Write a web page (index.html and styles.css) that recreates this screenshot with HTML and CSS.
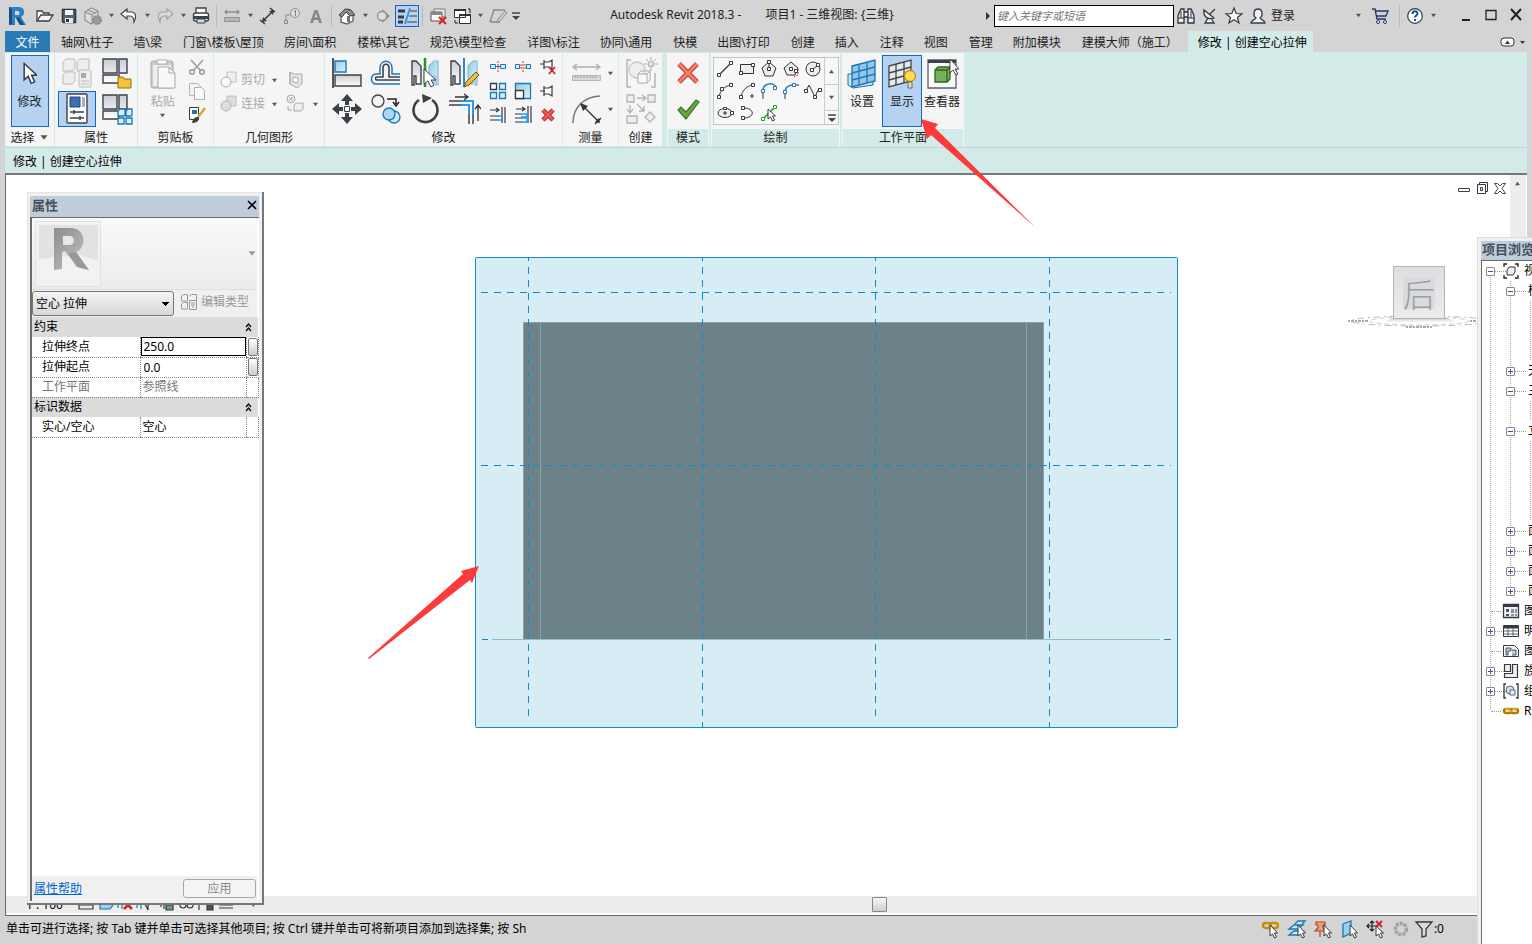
FILE: index.html
```html
<!DOCTYPE html>
<html lang="zh-CN">
<head>
<meta charset="utf-8">
<title>Autodesk Revit 2018.3 - 项目1 - 三维视图: {三维}</title>
<link rel="stylesheet" href="styles.css">
</head>
<body>
<svg class="sprite" aria-hidden="true">
<defs>
<linearGradient id="gw" x1="0" y1="0" x2="0" y2="1"><stop offset="0" stop-color="#c9cdd3"/><stop offset="1" stop-color="#fff"/></linearGradient>
<linearGradient id="gb" x1="0" y1="0" x2="1" y2="1"><stop offset="0" stop-color="#8fcbe9"/><stop offset="1" stop-color="#dff3fc"/></linearGradient>
<linearGradient id="gr" x1="0" y1="0" x2="1" y2="1"><stop offset="0" stop-color="#8e8e8e"/><stop offset="1" stop-color="#c4c4c4"/></linearGradient>
<linearGradient id="gs" x1="0" y1="0" x2="0" y2="1"><stop offset="0" stop-color="#bdbdbd"/><stop offset="1" stop-color="#fff" stop-opacity="0"/></linearGradient>
</defs>
<symbol id="cur" viewBox="0 0 12 20"><path d="M1 1v14l3.500-3 2.500 6 3-1.200-2.600-5.800H12z" fill="#fff" stroke="#3c3f48" stroke-width="1.300"/></symbol>
<symbol id="dn" viewBox="0 0 8 6"><path d="M1 1h6L4 5z" fill="currentColor"/></symbol>
<!-- quick access -->
<symbol id="logo" viewBox="0 0 20 20"><path d="M2 1h10c6 0 7 8 2 10l5 8h-6l-4-7H8v7H2z" fill="#2f7fc4"/><path d="M2 1l3 2v15l-3 1zM12 11l5 8h-4l-4-7z" fill="#174f8c"/><path d="M8 5h3c2 0 2 4 0 4H8z" fill="#d4d4d4"/></symbol>
<symbol id="open" viewBox="0 0 20 20"><path d="M2 15V5h5l1.500 2H14v3" fill="#fff" stroke="#3c4048" stroke-width="1.300"/><path d="M2 15l4-6h12l-4 6z" fill="#f4f4f4" stroke="#3c4048" stroke-width="1.300"/></symbol>
<symbol id="save" viewBox="0 0 20 20"><path d="M3.500 3.500h13v13h-12l-1-1z" fill="#566473" stroke="#2b3440" stroke-width="1.500"/><path d="M6 4h8v5H6z" fill="#f4f6f8"/><path d="M6 12h8v5H6z" fill="#e2e7ec"/><path d="M7 13h3v3H7z" fill="#2b3440"/></symbol>
<symbol id="cube" viewBox="0 0 20 20"><path d="M2 6l6-4 7 3v9l-7 4-6-4zM2 6l7 3 6-4M9 9v8M5 4l7 3" fill="#ddd" stroke="#949494" stroke-width="1.200"/><circle cx="14" cy="14" r="4" fill="#9a9a9a" stroke="#888" stroke-dasharray="2 1" stroke-width="2"/></symbol>
<symbol id="undo" viewBox="0 0 20 20"><path d="M2 8l6-5v3h4c5 0 6 5 3 10 0-4-1-6-4-6H8v3z" fill="#fff" stroke="#3c4048" stroke-width="1.200"/></symbol>
<symbol id="redo" viewBox="0 0 20 20"><path d="M18 8l-6-5v3H8c-5 0-6 5-3 10 0-4 1-6 4-6h3v3z" fill="#ddd" stroke="#a0a0a0" stroke-width="1.200"/></symbol>
<symbol id="print" viewBox="0 0 20 20"><path d="M5 7V2h10v5" fill="#fff" stroke="#3c4048" stroke-width="1.300"/><rect x="2.500" y="7" width="15" height="8" rx="2" fill="#fff" stroke="#3c4048" stroke-width="1.400"/><path d="M3 10h14v3H3z" fill="#3c4048"/><path d="M6 13h8v4H6z" fill="#bfe0f5" stroke="#3c4048"/></symbol>
<symbol id="meas" viewBox="0 0 20 20"><path d="M3 6h14M5 4L3 6l2 2M15 4l2 2-2 2" fill="none" stroke="#8f8f8f" stroke-width="1.400"/><path d="M2.500 11.500h15v4h-15z" fill="#b8b8b8" stroke="#949494"/></symbol>
<symbol id="dim" viewBox="0 0 20 20"><path d="M5 15L15 5M2 14l5 4M12 2l5 4" stroke="#333a44" stroke-width="1.500"/><path d="M4 16l1-5 4 4zM16 4l-1 5-4-4z" fill="#333a44"/></symbol>
<symbol id="tag" viewBox="0 0 20 20"><circle cx="13" cy="7" r="4.500" fill="#ddd" stroke="#949494"/><path d="M12 6l1.500-1.500V10M8.500 9H4v6M2.500 14.500h3v3h-3z" fill="none" stroke="#888"/></symbol>
<symbol id="lettera" viewBox="0 0 20 20"><path d="M4 17L8.500 4h3L16 17h-3l-.8-3H7.800L7 17zM8.500 11.500h3L10 7z" fill="#888"/></symbol>
<symbol id="home" viewBox="0 0 20 20"><path d="M4 10v6l6 2 6-3V8l-5-5z" fill="#fff" stroke="#4a4f58" stroke-width="1.200"/><path d="M2 9l6-6 6 1 4 5-5 1-4-4-4 5z" fill="#858b94" stroke="#444"/><path d="M10 10h3v6h-3z" fill="#6b737d"/></symbol>
<symbol id="sect" viewBox="0 0 20 20"><path d="M9 3l8 7-8 7z" fill="#919191"/><circle cx="9" cy="10" r="4.500" fill="#ddd" stroke="#919191" stroke-width="1.300"/></symbol>
<symbol id="thin" viewBox="0 0 20 20"><path d="M1 5h7M1 11h6M1 16h5" stroke="#333a44" stroke-width="3"/><path d="M13 5h7M12 10h8M10 16h10" stroke="#333a44" stroke-width="1"/><path d="M13 2L8 18" stroke="#2b8ad6" stroke-width="1.500"/></symbol>
<symbol id="wclose" viewBox="0 0 20 20"><path d="M6 3h11v8H6z" fill="#eee" stroke="#777"/><path d="M3 6h11v9H3z" fill="#fafafa" stroke="#555"/><path d="M3 6h11v3H3z" fill="#888"/><path d="M11 11l7 7M18 11l-7 7" stroke="#d92020" stroke-width="2"/></symbol>
<symbol id="wswitch" viewBox="0 0 20 20"><path d="M2.500 3.500h11v8h-11zM7.500 8.500h11v9h-11z" fill="#fff" stroke="#333"/><path d="M2 3h12v2H2zM7 8h12v2H7z" fill="#333"/><path d="M16 3h2v4M3 14v3h3" fill="none" stroke="#222"/></symbol>
<symbol id="pen" viewBox="0 0 20 20"><path d="M5 4h12M2 16L6 4M2 16h10" fill="none" stroke="#8d8d8d" stroke-width="1.500"/><path d="M9 17l1-4 7-8 2 2-7 8z" fill="#ccc" stroke="#8d8d8d"/></symbol>
<symbol id="cust" viewBox="0 0 12 12"><path d="M2 3h8" stroke="#444" stroke-width="1.500"/><path d="M2 6h8L6 10z" fill="#444"/></symbol>
<symbol id="bino" viewBox="0 0 20 20"><path d="M3 7l2-4h3v14H2v-7zM17 7l-2-4h-3v14h6v-7zM8 6h4v5H8z" fill="#eceef2" stroke="#2b3440" stroke-width="1.300"/><path d="M5 5v7M15 5v7M2 12h6M12 12h6" stroke="#2b3440"/></symbol>
<symbol id="dish" viewBox="0 0 20 20"><path d="M4 4c-1 7 4 10 10 8zM10 8l5-5M8 12l-3 5h9l-3-5" fill="#eee" stroke="#333a44" stroke-width="1.300"/></symbol>
<symbol id="star" viewBox="0 0 20 20"><path d="M10 2l2.200 5.500 5.800.3-4.500 3.700L15 17l-5-3.200L5 17l1.500-5.500L2 7.800l5.800-.3z" fill="#f7f7f7" stroke="#333a44" stroke-width="1.200"/></symbol>
<symbol id="user" viewBox="0 0 20 20"><path d="M3 17c0-3 4-3 5-5-3-2-3-9 2-9s5 7 2 9c1 2 5 2 5 5z" fill="#eef2f8" stroke="#333a44" stroke-width="1.300"/></symbol>
<symbol id="cart" viewBox="0 0 20 20"><path d="M2 3h3l2 10h9M5 5h13l-2 5H6" fill="#c9d0df" stroke="#29365c" stroke-width="1.300"/><circle cx="8" cy="16" r="1.500" fill="#fff" stroke="#29365c"/><circle cx="15" cy="16" r="1.500" fill="#fff" stroke="#29365c"/></symbol>
<symbol id="help" viewBox="0 0 20 20"><circle cx="10" cy="10" r="7.300" fill="#fff" stroke="#333a44" stroke-width="1.200"/><path d="M7.500 8c0-3.500 5-3.500 5-.5 0 2-2.500 2-2.500 4M10 13v2" fill="none" stroke="#174ea6" stroke-width="2"/></symbol>
<!-- properties -->
<symbol id="types" viewBox="0 0 34 34"><g fill="#eee" stroke="#bbb"><path d="M3 6l3-3h9v9l-3 3H3zM17 6l3-3h9v9l-3 3h-9zM3 19l3-3h9v9l-3 3H3z"/><rect x="19" y="14" width="12" height="17" rx="1"/></g><path d="M21 17h5v5h-5z" fill="#aaa"/><path d="M21 25h8M21 28h8" stroke="#bbb"/></symbol>
<symbol id="fam" viewBox="0 0 34 34"><g fill="url(#gw)" stroke="#3c4048" stroke-width="1.400"><path d="M3 3h14v14H3zM19 3h8v14h-8zM3 19h16v8H3z"/></g><path d="M18 21h5l1 2h7v9H18z" fill="#f5c33b" stroke="#9b6b06"/></symbol>
<symbol id="propi" viewBox="0 0 34 34"><rect x="7" y="2" width="20" height="29" rx="1" fill="#fff" stroke="#3c4048" stroke-width="1.400"/><path d="M10 5h10v10H10z" fill="#3c6fae" stroke="#1d4884"/><path d="M22 5h3v10h-3z" fill="#a9afb8"/><path d="M10 20h14M10 26h14M14 18v4M20 24v4" stroke="#3c4048" stroke-width="1.500"/></symbol>
<symbol id="famt" viewBox="0 0 34 34"><g fill="url(#gw)" stroke="#3c4048" stroke-width="1.400"><path d="M3 3h14v14H3zM19 3h8v14h-8zM3 19h16v8H3z"/></g><path d="M18 19l2-2h5v6l-1 1h-6zM26 19l2-2h4v6l-1 1h-5zM18 26h6v6h-6zM26 26h6v6h-6z" fill="#d7effb" stroke="#1b77b5" stroke-width="1.300"/></symbol>
<!-- clipboard -->
<symbol id="paste" viewBox="0 0 34 34"><rect x="5" y="4" width="22" height="27" rx="2" fill="#ccc" stroke="#aaa"/><path d="M7 8h18v21H7z" fill="#eee"/><path d="M11 3h10v4H11z" fill="#fff" stroke="#aaa"/><path d="M12 10h11l6 6v15H12z" fill="#f8f8f8" stroke="#aaa"/><path d="M23 10v6h6" fill="none" stroke="#aaa"/></symbol>
<symbol id="cut" viewBox="0 0 20 20"><path d="M4 3l9 10M16 3L7 13" stroke="#a5a5a5" stroke-width="1.800"/><circle cx="5" cy="15" r="2.300" fill="none" stroke="#999" stroke-width="1.500"/><circle cx="15" cy="15" r="2.300" fill="none" stroke="#999" stroke-width="1.500"/></symbol>
<symbol id="copyc" viewBox="0 0 20 20"><path d="M2.500 2.500h8l3 3v9h-11z" fill="#f3f3f3" stroke="#b8b8b8"/><path d="M7.500 6.500h7l3 3v9h-10z" fill="#fafafa" stroke="#b0b0b0"/></symbol>
<symbol id="brush" viewBox="0 0 20 20"><path d="M2.500 2.500h9v12h-9z" fill="#fff" stroke="#333a44"/><path d="M5 5h5v4H5z" fill="#2b6cb0"/><path d="M18 3l-7 9" stroke="#d8a42a" stroke-width="2.500"/><path d="M5 18c1-5 3-6 6-6l1 2c-1 3-4 4-7 4z" fill="#3c4048"/></symbol>
<!-- geometry -->
<symbol id="gcut" viewBox="0 0 20 20"><path d="M8 2h9v10H8z" fill="#eee" stroke="#c0c0c0"/><circle cx="7" cy="12" r="5" fill="#f9f9f9" stroke="#aaa"/></symbol>
<symbol id="gjoin" viewBox="0 0 20 20"><path d="M8 2h9v10H8z" fill="#ddd" stroke="#c0c0c0"/><circle cx="7" cy="12" r="5" fill="#ddd" stroke="#b5b5b5"/></symbol>
<symbol id="gface" viewBox="0 0 20 20"><path d="M5 2l4 2h8v10l-5 4-7-4zM5 2v12" fill="#e6e6e6" stroke="#aaa"/><path d="M8 7l5 1v5l-5-1z" fill="#fff" stroke="#aaa"/></symbol>
<symbol id="gpaint" viewBox="0 0 20 20"><circle cx="6" cy="5" r="4" fill="#eee" stroke="#aaa"/><path d="M4 3l4 4M8 3L4 7M3 12v4h4M9 11l2-2h7v6l-2 2H9z" fill="#eee" stroke="#aaa"/></symbol>
<!-- modify -->
<symbol id="align" viewBox="0 0 34 34"><path d="M3 2v30" stroke="#222" stroke-width="1.500"/><path d="M5 5h11v11H5z" fill="url(#gb)" stroke="#1b77b5" stroke-width="1.400"/><path d="M5 19h26v11H5z" fill="url(#gw)" stroke="#3c4048" stroke-width="1.400"/></symbol>
<symbol id="offset" viewBox="0 0 34 34"><path d="M31 28H7c-6 0-6-10 0-10h4v-6c0-9 12-9 12 0v6h8" fill="none" stroke="#1b77b5" stroke-width="1.500"/><path d="M31 24H8c-2 0-2-3 0-3h6v-9c0-5 6-5 6 0v9h11" fill="none" stroke="#3c4048" stroke-width="1.600"/></symbol>
<symbol id="mirp" viewBox="0 0 34 34"><path d="M4 5h4l5 5v18H8V20H6v9H4z" fill="url(#gw)" stroke="#3c4048" stroke-width="1.400"/><path d="M30 5h-4l-5 5v18h5V20h2v9h2z" fill="url(#gb)" stroke="#8cb8d0" stroke-width="1.200"/><path d="M17 2v29" stroke="#21951c" stroke-width="2.500"/><path d="M16 13v15l4-3 3 6 3-2-3-5h5z" fill="#fff" stroke="#3c3f48"/></symbol>
<symbol id="mird" viewBox="0 0 34 34"><path d="M4 5h4l5 5v18H8V20H6v9H4z" fill="url(#gw)" stroke="#3c4048" stroke-width="1.400"/><path d="M30 5h-4l-5 5v18h5V20h2v9h2z" fill="url(#gb)" stroke="#8cb8d0" stroke-width="1.200"/><path d="M17 2v29" stroke="#2b8ad6" stroke-width="2"/><path d="M17 31l2-5 10-10 3 3-10 10z" fill="#f5bb3c" stroke="#6b4c16"/></symbol>
<symbol id="move" viewBox="0 0 34 34"><path d="M17 2l6 7h-4v4h-4V9h-4zM17 32l6-7h-4v-4h-4v4h-4zM2 17l7-6v4h4v4H9v4zM32 17l-7-6v4h-4v4h4v4z" fill="#3c4048"/><path d="M14.500 14.500h5v5h-5z" fill="#fff" stroke="#3c4048"/></symbol>
<symbol id="copym" viewBox="0 0 34 34"><circle cx="9" cy="9" r="6" fill="#f5f5f5" stroke="#3c4048" stroke-width="1.300"/><path d="M18 7h9v5M24 10l3 4 3-4" fill="none" stroke="#222" stroke-width="1.500"/><circle cx="25" cy="25" r="6" fill="#cde8f7" stroke="#1b77b5" stroke-width="1.300"/><circle cx="20" cy="22" r="6" fill="#a9d7f0" stroke="#1b77b5" stroke-width="1.300"/></symbol>
<symbol id="rotate" viewBox="0 0 34 34"><path d="M11 8a12 12 0 1 0 13 0" fill="none" stroke="#3c4048" stroke-width="2.600"/><path d="M14 2l10 4-9 5z" fill="#3c4048"/></symbol>
<symbol id="trim" viewBox="0 0 34 34"><path d="M2 9h14M2 13h14M22 20v12M26 20v12" stroke="#3c4048" stroke-width="1.500"/><path d="M14 9h12v13M14 13h8v9" fill="none" stroke="#2b9ae6" stroke-width="2"/><path d="M8 5h12M17 2l4 3-4 3M31 29V14M28 17l3-4 3 4" fill="none" stroke="#333" stroke-width="1.300"/></symbol>
<symbol id="split" viewBox="0 0 20 20"><path d="M2.500 7.500h5v4h-5zM12.500 7.500h5v4h-5z" fill="#d7effb" stroke="#1b77b5"/><path d="M8 9.500h4" stroke="#1b77b5"/><path d="M10 4v12" stroke="#d43c1e" stroke-dasharray="2 1"/></symbol>
<symbol id="splitg" viewBox="0 0 20 20"><path d="M2.500 7.500h4v4h-4zM13.500 7.500h4v4h-4z" fill="#d7effb" stroke="#1b77b5"/><path d="M10 4v12M8 7v5M12 7v5" stroke="#d43c1e" stroke-dasharray="2 1"/></symbol>
<symbol id="unpin" viewBox="0 0 20 20"><path d="M2 7h4M6 3v9M6 5h5l3-2v9l-3-2H6" fill="#fff" stroke="#333a44" stroke-width="1.200"/><path d="M11 10l6 7M17 10l-6 7" stroke="#d92020" stroke-width="1.800"/></symbol>
<symbol id="array" viewBox="0 0 20 20"><path d="M2.500 2.500h6v6h-6z" fill="#fff" stroke="#333a44" stroke-width="1.300"/><path d="M11.500 2.500h6v6h-6zM2.500 11.500h6v6h-6zM11.500 11.500h6v6h-6z" fill="#d7effb" stroke="#1b77b5" stroke-width="1.300"/></symbol>
<symbol id="scale" viewBox="0 0 20 20"><path d="M2.500 2.500h15v15h-15z" fill="url(#gb)" stroke="#1b77b5" stroke-width="1.300"/><path d="M2.500 9.500h8v8h-8z" fill="#fff" stroke="#333a44" stroke-width="1.300"/></symbol>
<symbol id="pin" viewBox="0 0 20 20"><path d="M2 10h5M6 5v10M6 7h5l3-2v10l-3-2H6" fill="#fff" stroke="#333a44" stroke-width="1.200"/></symbol>
<symbol id="trim1" viewBox="0 0 20 20"><path d="M2 5h8M8 3l3 2-3 2M2 11h8M2 15h8M14 2v16M17 2v16" stroke="#333a44" stroke-width="1.200" fill="none"/><path d="M9 11h5v4H9" stroke="#2b9ae6" fill="none" stroke-width="1.500"/></symbol>
<symbol id="trim2" viewBox="0 0 20 20"><path d="M3 4h8M9 2l3 2-3 2M2 9h7M2 13h7M2 17h7M15 1v17M18 1v17" stroke="#333a44" stroke-width="1.200" fill="none"/><path d="M8 9h6v3H8M8 13h6v4H8" stroke="#2b9ae6" fill="none" stroke-width="1.500"/></symbol>
<symbol id="del" viewBox="0 0 20 20"><path d="M5 5l10 10M15 5L5 15" stroke="#a51c1c" stroke-width="4.500"/><path d="M5 5l10 10M15 5L5 15" stroke="#f05a50" stroke-width="2.500"/></symbol>
<symbol id="ruler" viewBox="0 0 34 34"><path d="M4 11h27M8 8l-4 3 4 3M27 8l4 3-4 3" fill="none" stroke="#b0b0b0" stroke-width="1.400"/><path d="M3.500 19.500h28v5h-28z" fill="#d8d8d8" stroke="#b8b8b8"/><path d="M6 20v2M9 20v2M12 20v2M15 20v2M18 20v2M21 20v2M24 20v2M27 20v2" stroke="#999"/></symbol>
<symbol id="arc" viewBox="0 0 34 34"><path d="M4 31C4 16 14 5 31 4" fill="none" stroke="#777" stroke-width="1.600"/><path d="M13 13l17 17M32 26l-6 6" stroke="#333" stroke-width="1.400"/><path d="M11 11l8 3-5 5zM31 31l-5-1 4-4z" fill="#333"/></symbol>
<symbol id="grp" viewBox="0 0 34 34"><path d="M7 4H3v27h4M27 31h4V17" fill="none" stroke="#b5b5b5" stroke-width="1.500"/><circle cx="13" cy="14" r="8" fill="#eee" stroke="#c5c5c5" stroke-width="1.300"/><path d="M14 18l3-3h9v9l-3 3h-9zM14 18h9l3-3M23 18v9" fill="#fafafa" stroke="#aaa"/><circle cx="27" cy="8" r="3" fill="#ddd" stroke="#aaa"/><path d="M27 1v3M27 12v3M20 8h3M31 8h3M22 3l2 2M32 3l-2 2" stroke="#aaa"/></symbol>
<symbol id="simi" viewBox="0 0 34 34"><g fill="#eee" stroke="#b5b5b5" stroke-width="1.300"><path d="M3 3h7v7H3zM24 3h7v7h-7zM3 24h10v7H3zM26 20l5 5-5 5-5-5z"/><path d="M13 6h8M18 3l4 3-4 3M6 13v7M3 17l3 4 3-4M13 12l7 7M20 14v5h-5" fill="none"/></g></symbol>
<symbol id="bigx" viewBox="0 0 26 26"><path d="M4 4l18 18M22 4L4 22" stroke="#c03a2c" stroke-width="5"/><path d="M4 4l18 18M22 4L4 22" stroke="#f47c6c" stroke-width="3"/></symbol>
<symbol id="tick" viewBox="0 0 26 26"><path d="M3 14l3-3 5 5L21 4l3 2-13 17z" fill="#6aa644" stroke="#3f742a" stroke-width="1.200"/></symbol>
<!-- draw -->
<symbol id="d1" viewBox="0 0 20 20"><path d="M4 16L16 4" stroke="#333" stroke-width="1.200"/><path d="M2.500 14.500h3v3h-3zM14.500 2.500h3v3h-3z" fill="#fff" stroke="#333a44"/></symbol>
<symbol id="d2" viewBox="0 0 20 20"><path d="M3.500 5.500h13v9h-13z" fill="#eee" stroke="#333"/><path d="M2.500 12.500h3v3h-3zM14.500 4.500h3v3h-3z" fill="#fff" stroke="#333a44"/></symbol>
<symbol id="d3" viewBox="0 0 20 20"><path d="M10 3l7 6-3 8H6L3 9z" fill="#eee" stroke="#333"/><path d="M10 4v5" stroke="#333"/><path d="M8.500 8.500h3v3h-3zM8.500 1.500h3v3h-3z" fill="#fff" stroke="#333a44"/></symbol>
<symbol id="d4" viewBox="0 0 20 20"><path d="M10 3l7 6-3 7H6L3 9z" fill="#eee" stroke="#333"/><path d="M17 10v6l-4 2" fill="none" stroke="#e02020" stroke-dasharray="2 1"/><path d="M8.500 8.500h3v3h-3zM13.500 10.500h3v3h-3z" fill="#fff" stroke="#333a44"/></symbol>
<symbol id="d5" viewBox="0 0 20 20"><circle cx="10" cy="10" r="7" fill="#eee" stroke="#333"/><path d="M9 11l6-5" stroke="#333"/><path d="M7.500 9.500h3v3h-3zM13.500 4.500h3v3h-3z" fill="#fff" stroke="#333a44"/></symbol>
<symbol id="d6" viewBox="0 0 20 20"><path d="M4 16c1-6 5-11 12-12" fill="none" stroke="#333"/><path d="M2.500 14.500h3v3h-3zM14.500 2.500h3v3h-3zM5.500 6.500h3v3h-3z" fill="#fff" stroke="#333a44"/></symbol>
<symbol id="d7" viewBox="0 0 20 20"><path d="M4 16c1-6 5-11 12-12M13 15h4M15 13v4" fill="none" stroke="#333"/><path d="M2.500 14.500h3v3h-3zM14.500 2.500h3v3h-3z" fill="#fff" stroke="#333a44"/></symbol>
<symbol id="d8" viewBox="0 0 20 20"><path d="M4 10c0-9 12-9 13-3" fill="none" stroke="#1b77b5" stroke-width="1.500"/><path d="M4 12v6" stroke="#333"/><path d="M2.500 8.500h3v3h-3zM14.500 5.500h3v3h-3z" fill="#fff" stroke="#1b77b5"/></symbol>
<symbol id="d9" viewBox="0 0 20 20"><path d="M4 10c1-4 4-6 8-6" fill="none" stroke="#1b77b5" stroke-width="1.500"/><path d="M4 13v5M15 4h3" stroke="#333"/><path d="M2.500 9.500h3v3h-3zM11.500 2.500h3v3h-3z" fill="#fff" stroke="#1b77b5"/></symbol>
<symbol id="d10" viewBox="0 0 20 20"><path d="M3 10L6 4l4 8 2 4 3-7 3 0" fill="none" stroke="#333" stroke-linejoin="round"/><path d="M1.500 8.500h3v3h-3zM10.500 14.500h3v3h-3zM15.500 7.500h3v3h-3z" fill="#fff" stroke="#333a44"/></symbol>
<symbol id="d11" viewBox="0 0 20 20"><ellipse cx="10" cy="10" rx="7" ry="4.500" fill="#eee" stroke="#333"/><path d="M8 10h4M10 8v4" stroke="#333"/><path d="M8.500 4.500h3v2h-3zM15.500 8.500h3v3h-3z" fill="#fff" stroke="#333a44"/></symbol>
<symbol id="d12" viewBox="0 0 20 20"><path d="M7 5c11 0 11 10 0 10" fill="none" stroke="#333"/><path d="M4.500 3.500h3v3h-3zM4.500 13.500h3v3h-3z" fill="#fff" stroke="#333a44"/></symbol>
<symbol id="d13" viewBox="0 0 20 20"><path d="M4 16L16 4" stroke="#22a81e" stroke-width="1.600"/><path d="M2.500 14.500h3v3h-3zM14.500 2.500h3v3h-3z" fill="#fff" stroke="#22a81e"/><path d="M9 6v10l2.500-2 2 4 2-1-2-4h3z" fill="#fff" stroke="#333a44"/></symbol>
<!-- work plane -->
<symbol id="wpset" viewBox="0 0 34 34"><path d="M3 17h5l20-3v14L8 31l-5-3z" fill="#cfe6f5" stroke="#1b6fa8"/><path d="M7 9l23-6v21L7 30z" fill="#8fc8ec" stroke="#1b6fa8" stroke-width="1.300"/><path d="M7 16l23-6M7 23l23-6M14 7v21M22 5v21" stroke="#2079b5" stroke-width="1.300"/></symbol>
<symbol id="wpshow" viewBox="0 0 34 34"><path d="M4 9l22-6v21L4 30z" fill="#e6e9ed" stroke="#444" stroke-width="1.300"/><path d="M4 16l22-6M4 23l22-6M11 7v21M19 5v21" stroke="#444" stroke-width="1.300"/><circle cx="25" cy="19" r="5.500" fill="#ffe04a" stroke="#c78a12" stroke-width="1.300"/><path d="M23 25h4v6h-4z" fill="#ddd" stroke="#666"/></symbol>
<symbol id="wpview" viewBox="0 0 34 34"><path d="M3 3h28v28H3z" fill="#fafafa" stroke="#5a5f68" stroke-width="1.300"/><path d="M3 3h28v3H3z" fill="#3c4048"/><path d="M10 13l3-3h12v12l-3 3H10z" fill="#76b356" stroke="#2e6420" stroke-width="1.300"/><path d="M10 13h12v12M22 13l3-3" fill="none" stroke="#2e6420" stroke-width="1.300"/><path d="M25 2v14l3-3 3 5 2-1-3-5h4z" fill="#fff" stroke="#444"/></symbol>
<!-- browser and status -->
<symbol id="bview" viewBox="0 0 18 18"><path d="M5 2H2v3M13 2h3v3M5 16H2v-3M13 16h3v-3" fill="none" stroke="#222" stroke-width="1.300"/><path d="M5 8l2-3h6v5l-2 3H5z" fill="#eef" stroke="#333"/></symbol>
<symbol id="bleg" viewBox="0 0 18 18"><path d="M1.500 2.500h15v13h-15z" fill="#eef2f6" stroke="#333a44" stroke-width="1.300"/><path d="M2 4h14" stroke="#333a44" stroke-width="2"/><path d="M4 7h3v3H4zM4 12h3v2H4z" fill="#4a5568"/><path d="M9 8h6M9 10h6M9 13h6" stroke="#333" stroke-dasharray="3 1"/></symbol>
<symbol id="bsch" viewBox="0 0 18 18"><path d="M1.500 3.500h15v11h-15z" fill="#fff" stroke="#333a44"/><path d="M2 5h14" stroke="#333a44" stroke-width="3"/><path d="M2 9h14M2 12h14M6 6v9M11 6v9" stroke="#666"/></symbol>
<symbol id="bsheet" viewBox="0 0 18 18"><path d="M1.500 3.500h11l4 4v7h-15z" fill="#fff" stroke="#333a44"/><path d="M4 6h5v3H6v4H4zM10 8h4v5h-4" fill="#bcd" stroke="#456"/></symbol>
<symbol id="bfam" viewBox="0 0 18 18"><path d="M2.500 2.500h6v7h-6zM10.500 2.500h5v13h-13v-4h8z" fill="#eee" stroke="#333a44" stroke-width="1.200"/></symbol>
<symbol id="bgrp" viewBox="0 0 18 18"><path d="M4 2H2v14h2M14 2h2v14h-2" fill="none" stroke="#333" stroke-width="1.300"/><circle cx="8" cy="8" r="4" fill="#dde" stroke="#567"/><path d="M8 8h5v5H8z" fill="#eef" stroke="#567"/></symbol>
<symbol id="link" viewBox="0 0 18 18"><rect x="2" y="7" width="7" height="4" rx="2" fill="none" stroke="#b07a00" stroke-width="2.400"/><rect x="9" y="7" width="7" height="4" rx="2" fill="none" stroke="#b07a00" stroke-width="2.400"/><path d="M3 7h5M10 7h5M6 9h6" stroke="#ffd23c" stroke-width="1.200"/></symbol>
<symbol id="s1" viewBox="0 0 20 20"><rect x="2" y="4" width="8" height="5" rx="2.500" fill="none" stroke="#c89000" stroke-width="2.400"/><rect x="9" y="4" width="8" height="5" rx="2.500" fill="none" stroke="#c89000" stroke-width="2.400"/><path d="M9 6v11l2.500-2 2 4 2-1-2-4h3z" fill="#fff" stroke="#333a44"/></symbol>
<symbol id="s2" viewBox="0 0 20 20"><path d="M2 10l5-4h9l-5 4zM2 16l5-4h9l-5 4zM8 5l3-3h7l-3 3" fill="#cfe8f7" stroke="#1b77b5" stroke-width="1.300"/><path d="M11 6v11l2.500-2 2 4 2-1-2-4h3z" fill="#fff" stroke="#333a44"/></symbol>
<symbol id="s3" viewBox="0 0 20 20"><path d="M3 3h9v3h-2v3l3 3H2l3-3V6H3zM7 12v6" fill="#f2a07a" stroke="#b04a1c" stroke-width="1.200"/><path d="M11 6v11l2.500-2 2 4 2-1-2-4h3z" fill="#fff" stroke="#333a44"/></symbol>
<symbol id="s4" viewBox="0 0 20 20"><path d="M4 5l8-3v12l-8 4z" fill="#9bd0f0" stroke="#1b77b5" stroke-width="1.300"/><path d="M11 6v11l2.500-2 2 4 2-1-2-4h3z" fill="#fff" stroke="#333a44"/></symbol>
<symbol id="s5" viewBox="0 0 20 20"><path d="M2 7h10M7 2v10M4 5L2 7l2 2M5 4l2-2 2 2M5 10l2 2 2-2" fill="none" stroke="#222" stroke-width="1.200"/><path d="M11 2l6 6M17 2l-6 6" stroke="#d92020" stroke-width="2"/><path d="M11 7v10l2.500-2 2 4 2-1-2-4h3z" fill="#fff" stroke="#333a44"/></symbol>
<symbol id="s6" viewBox="0 0 20 20"><circle cx="10" cy="10" r="5.500" fill="none" stroke="#a2a2a2" stroke-width="3.500" stroke-dasharray="3 1"/></symbol>
<symbol id="s7" viewBox="0 0 20 20"><path d="M2 3h16l-6 7v7l-4 1v-8z" fill="#d6dbe2" stroke="#333a44" stroke-width="1.300"/></symbol>
</svg>

<header class="titlebar">
  <div class="qat">
    <span class="logo"><svg class="i20"><use href="#logo"/></svg></span>
    <button aria-label="打开"><svg class="i20"><use href="#open"/></svg></button>
    <button aria-label="保存"><svg class="i20"><use href="#save"/></svg></button>
    <button aria-label="同步"><svg class="i20"><use href="#cube"/></svg></button>
    <button class="dd" aria-label="同步选项"><svg class="arr"><use href="#dn"/></svg></button>
    <button aria-label="放弃"><svg class="i20"><use href="#undo"/></svg></button>
    <button class="dd" aria-label="放弃列表"><svg class="arr"><use href="#dn"/></svg></button>
    <button aria-label="重做"><svg class="i20"><use href="#redo"/></svg></button>
    <button class="dd" aria-label="重做列表"><svg class="arr"><use href="#dn"/></svg></button>
    <button aria-label="打印"><svg class="i20"><use href="#print"/></svg></button>
    <i class="vsep"></i>
    <button aria-label="测量"><svg class="i20"><use href="#meas"/></svg></button>
    <button class="dd" aria-label="测量选项"><svg class="arr"><use href="#dn"/></svg></button>
    <button aria-label="对齐尺寸标注"><svg class="i20"><use href="#dim"/></svg></button>
    <button aria-label="按类别标记"><svg class="i20"><use href="#tag"/></svg></button>
    <button aria-label="文字"><svg class="i20"><use href="#lettera"/></svg></button>
    <i class="vsep"></i>
    <button aria-label="默认三维视图"><svg class="i20"><use href="#home"/></svg></button>
    <button class="dd" aria-label="三维视图选项"><svg class="arr"><use href="#dn"/></svg></button>
    <button aria-label="剖面"><svg class="i20"><use href="#sect"/></svg></button>
    <button class="on" aria-label="细线"><svg class="i20"><use href="#thin"/></svg></button>
    <i class="vsep"></i>
    <button aria-label="关闭隐藏窗口"><svg class="i20"><use href="#wclose"/></svg></button>
    <button aria-label="切换窗口"><svg class="i20"><use href="#wswitch"/></svg></button>
    <button class="dd" aria-label="窗口列表"><svg class="arr"><use href="#dn"/></svg></button>
    <button aria-label="编辑"><svg class="i20"><use href="#pen"/></svg></button>
    <button class="dd" aria-label="自定义快速访问工具栏"><svg class="i12"><use href="#cust"/></svg></button>
  </div>
  <h1 class="title"><span>Autodesk Revit 2018.3 -</span><span>项目1 - 三维视图: {三维}</span></h1>
  <div class="info">
    <svg class="i12" viewBox="0 0 12 12"><path d="M4 2l4 4-4 4z" fill="#333"/></svg>
    <input class="search" type="text" placeholder="键入关键字或短语" aria-label="搜索">
    <button aria-label="搜索"><svg class="i20"><use href="#bino"/></svg></button>
    <button aria-label="通信中心"><svg class="i20"><use href="#dish"/></svg></button>
    <button aria-label="收藏夹"><svg class="i20"><use href="#star"/></svg></button>
    <button class="login"><svg class="i20"><use href="#user"/></svg>登录</button>
    <button class="dd" aria-label="登录选项"><svg class="arr"><use href="#dn"/></svg></button>
    <button class="cart" aria-label="商店"><svg class="i20"><use href="#cart"/></svg></button>
    <i class="vsep"></i>
    <button aria-label="帮助"><svg class="i20"><use href="#help"/></svg></button>
    <button class="dd" aria-label="帮助选项"><svg class="arr"><use href="#dn"/></svg></button>
  </div>
  <div class="winbtns">
    <button aria-label="最小化"><svg class="i14" viewBox="0 0 14 14"><path d="M3 12h8" stroke="#222" stroke-width="2"/></svg></button>
    <button aria-label="最大化"><svg class="i14" viewBox="0 0 14 14"><path d="M2 2.500h10v9H2z" fill="none" stroke="#222" stroke-width="1.300"/></svg></button>
    <button aria-label="关闭"><svg class="i14" viewBox="0 0 14 14"><path d="M2 1l10 11M12 1L2 12" stroke="#222" stroke-width="2"/></svg></button>
  </div>
</header>

<nav class="tabs">
  <button class="file">文件</button>
  <button>轴网\柱子</button><button>墙\梁</button><button>门窗\楼板\屋顶</button><button>房间\面积</button><button>楼梯\其它</button><button>规范\模型检查</button><button>详图\标注</button><button>协同\通用</button><button>快模</button><button>出图\打印</button><button>创建</button><button>插入</button><button>注释</button><button>视图</button><button>管理</button><button>附加模块</button><button>建模大师（施工）</button><button class="active">修改 | 创建空心拉伸</button>
  <button class="fold" aria-label="最小化功能区"><svg width="26" height="12" viewBox="0 0 26 12"><rect x="1" y="2" width="13" height="8" rx="3" fill="#fff" stroke="#333"/><path d="M5 8h5L7.500 4.500zM20 5h5l-2.500 3z" fill="#333"/></svg></button>
</nav>

<section class="ribbon">
  <div class="panel p-select">
    <div class="pbody"><button class="big on"><svg class="pointer"><use href="#cur"/></svg><span>修改</span></button></div>
    <div class="cap">选择 <svg class="arr wide"><use href="#dn"/></svg></div>
  </div>
  <div class="panel p-props">
    <div class="pbody grid2">
      <button aria-label="类型属性"><svg class="i34"><use href="#types"/></svg></button><button aria-label="族类别"><svg class="i34"><use href="#fam"/></svg></button>
      <button class="on" aria-label="属性"><svg class="i34"><use href="#propi"/></svg></button><button aria-label="族类型"><svg class="i34"><use href="#famt"/></svg></button>
    </div>
    <div class="cap">属性</div>
  </div>
  <div class="panel p-clip">
    <div class="pbody">
      <button class="big off"><svg class="i34"><use href="#paste"/></svg><span>粘贴</span><svg class="arr"><use href="#dn"/></svg></button>
      <div class="col3"><button aria-label="剪切"><svg class="i20"><use href="#cut"/></svg></button><button aria-label="复制"><svg class="i20"><use href="#copyc"/></svg></button><button aria-label="匹配类型"><svg class="i20"><use href="#brush"/></svg></button></div>
    </div>
    <div class="cap">剪贴板</div>
  </div>
  <div class="panel p-geo">
    <div class="pbody georows">
      <div class="row"><button class="txt"><svg class="i20"><use href="#gcut"/></svg>剪切</button><svg class="arr"><use href="#dn"/></svg><button class="side" aria-label="洞口"><svg class="i20"><use href="#gface"/></svg></button></div>
      <div class="row"><button class="txt"><svg class="i20"><use href="#gjoin"/></svg>连接</button><svg class="arr"><use href="#dn"/></svg><button class="side" aria-label="填色"><svg class="i20"><use href="#gpaint"/></svg></button><svg class="arr"><use href="#dn"/></svg></div>
    </div>
    <div class="cap">几何图形</div>
  </div>
  <div class="panel p-mod">
    <div class="pbody">
      <div class="grid4">
        <button aria-label="对齐"><svg class="i34"><use href="#align"/></svg></button><button aria-label="偏移"><svg class="i34"><use href="#offset"/></svg></button><button aria-label="镜像拾取轴"><svg class="i34"><use href="#mirp"/></svg></button><button aria-label="镜像绘制轴"><svg class="i34"><use href="#mird"/></svg></button>
        <button aria-label="移动"><svg class="i34"><use href="#move"/></svg></button><button aria-label="复制"><svg class="i34"><use href="#copym"/></svg></button><button aria-label="旋转"><svg class="i34"><use href="#rotate"/></svg></button><button aria-label="修剪"><svg class="i34"><use href="#trim"/></svg></button>
      </div>
      <div class="grid3">
        <button aria-label="拆分图元"><svg class="i20"><use href="#split"/></svg></button><button aria-label="用间隙拆分"><svg class="i20"><use href="#splitg"/></svg></button><button aria-label="解锁"><svg class="i20"><use href="#unpin"/></svg></button>
        <button aria-label="阵列"><svg class="i20"><use href="#array"/></svg></button><button aria-label="缩放"><svg class="i20"><use href="#scale"/></svg></button><button aria-label="锁定"><svg class="i20"><use href="#pin"/></svg></button>
        <button aria-label="修剪单个图元"><svg class="i20"><use href="#trim1"/></svg></button><button aria-label="修剪多个图元"><svg class="i20"><use href="#trim2"/></svg></button><button aria-label="删除"><svg class="i20"><use href="#del"/></svg></button>
      </div>
    </div>
    <div class="cap">修改</div>
  </div>
  <div class="panel p-meas">
    <div class="pbody meas">
      <button aria-label="测量"><svg class="i34"><use href="#ruler"/></svg></button><svg class="arr"><use href="#dn"/></svg>
      <button aria-label="尺寸标注"><svg class="i34"><use href="#arc"/></svg></button><svg class="arr"><use href="#dn"/></svg>
    </div>
    <div class="cap">测量</div>
  </div>
  <div class="panel p-new">
    <div class="pbody stack"><button aria-label="创建组"><svg class="i34"><use href="#grp"/></svg></button><button aria-label="创建类似实例"><svg class="i34"><use href="#simi"/></svg></button></div>
    <div class="cap">创建</div>
  </div>
  <div class="panel ctx p-mode">
    <div class="pbody stack"><button aria-label="取消"><svg class="i26"><use href="#bigx"/></svg></button><button aria-label="完成"><svg class="i26"><use href="#tick"/></svg></button></div>
    <div class="cap">模式</div>
  </div>
  <div class="panel ctx p-draw">
    <div class="pbody">
      <div class="gallery">
        <div class="tools">
          <button aria-label="线"><svg class="i20"><use href="#d1"/></svg></button><button aria-label="矩形"><svg class="i20"><use href="#d2"/></svg></button><button aria-label="内接多边形"><svg class="i20"><use href="#d3"/></svg></button><button aria-label="外接多边形"><svg class="i20"><use href="#d4"/></svg></button><button aria-label="圆形"><svg class="i20"><use href="#d5"/></svg></button>
          <button aria-label="起点终点半径弧"><svg class="i20"><use href="#d6"/></svg></button><button aria-label="圆心端点弧"><svg class="i20"><use href="#d7"/></svg></button><button aria-label="相切端点弧"><svg class="i20"><use href="#d8"/></svg></button><button aria-label="圆角弧"><svg class="i20"><use href="#d9"/></svg></button><button aria-label="样条曲线"><svg class="i20"><use href="#d10"/></svg></button>
          <button aria-label="椭圆"><svg class="i20"><use href="#d11"/></svg></button><button aria-label="半椭圆"><svg class="i20"><use href="#d12"/></svg></button><button aria-label="拾取线"><svg class="i20"><use href="#d13"/></svg></button>
        </div>
        <div class="gscroll"><button aria-label="向上"><svg class="arr up"><use href="#dn"/></svg></button><button aria-label="向下"><svg class="arr"><use href="#dn"/></svg></button><button aria-label="展开"><svg class="i12"><use href="#cust"/></svg></button></div>
      </div>
    </div>
    <div class="cap">绘制</div>
  </div>
  <div class="panel ctx p-wp">
    <div class="pbody">
      <button class="big"><svg class="i34"><use href="#wpset"/></svg><span>设置</span></button>
      <button class="big on"><svg class="i34"><use href="#wpshow"/></svg><span>显示</span></button>
      <button class="big"><svg class="i34"><use href="#wpview"/></svg><span>查看器</span></button>
    </div>
    <div class="cap">工作平面</div>
  </div>
</section>

<div class="options">修改 | 创建空心拉伸</div>

<main class="work">
  <svg class="model" width="703" height="471" viewBox="0 0 703 471">
    <rect x=".5" y=".5" width="702" height="470" rx="1" fill="#d7edf6" stroke="#0b8fc4"/>
    <rect x="48.500" y="65.500" width="520" height="317" fill="#6c8289" stroke="#8aa1a9"/>
    <path d="M65.500 66v316M551.500 66v316" stroke="#8aa1a9"/>
    <path d="M17 382.500h668" stroke="#93bfb4"/>
    <path d="M7 382.500h6M689 382.500h7" stroke="#0b8fc4"/>
    <path d="M53.500 0v464M227.500 0v471M400.500 0v464M574.500 0v471" stroke="#0b8fc4" stroke-dasharray="7 6" stroke-dashoffset="3"/>
    <path d="M6 35.500h690M6 208.500h690" stroke="#0b8fc4" stroke-dasharray="7 6"/>
  </svg>
  <div class="mdi">
    <button aria-label="最小化视图"><svg class="i14" viewBox="0 0 14 14"><path d="M1.500 7.500h11v3h-11z" fill="#fff" stroke="#444"/></svg></button>
    <button aria-label="还原视图"><svg class="i14" viewBox="0 0 14 14"><path d="M4.500 3.500v-2h8v9h-2" fill="none" stroke="#334"/><path d="M2.500 3.500h8v9h-8zM5.500 6.500h2v3h-2z" fill="#fff" stroke="#334"/></svg></button>
    <button aria-label="关闭视图"><svg class="i14" viewBox="0 0 14 14"><path d="M1.500 2.500h3L7 5l2.500-2.500h3L9 7.500l3.500 5h-3L7 10l-2.500 2.500h-3l3.500-5z" fill="#fff" stroke="#444"/></svg></button>
  </div>
  <div class="cube">
    <svg class="ring" width="146" height="20" viewBox="0 0 146 20"><ellipse cx="73" cy="9" rx="68" ry="5" fill="none" stroke="#bbb" stroke-dasharray="7 4 2 3"/><ellipse cx="73" cy="9" rx="50" ry="4" fill="none" stroke="#ccc" stroke-dasharray="5 3"/><path d="M47 6h54l14 6H33z" fill="url(#gs)"/><path d="M2 9h20M124 9h20M60 15h26" stroke="#aaa" stroke-width="2" stroke-dasharray="2 1 3 1"/></svg>
    <button class="face"><span>后</span></button>
  </div>
  <div class="vscroll"><svg class="arr up"><use href="#dn"/></svg></div>
  <div class="viewbar">
    <div class="vctl"><span class="scale">1 : 100</span>
      <svg width="158" height="16" viewBox="0 0 158 16"><g fill="#e8eef2" stroke="#333a44" stroke-width="1.200"><path d="M2 3h14v9H2zM2 8h14"/><path d="M23 3h13v5l-3 4H23z" fill="#9bd0f0" stroke="#1b77b5"/><path d="M41 7v4M45 5v7M64 5v7M60 7v4" stroke="#1b77b5"/><path d="M47 4l8 8M55 4l-8 8" stroke="#d92020" stroke-width="2.500"/><path d="M66 5h8l-3 4v4l-2-4z" fill="#bcd"/><path d="M82 4h5v8M84 5v5"/><path d="M89 8h7v5h-7z" fill="#6a9a76"/><circle cx="106" cy="8" r="3"/><circle cx="113" cy="8" r="3"/><path d="M122 4v9M122 6h8"/><path d="M130 8h6v5h-6z" fill="#555"/><path d="M142 5h10M142 8h14M142 11h14"/></g></svg>
      <svg class="arr left"><use href="#dn"/></svg>
    </div>
    <div class="htrack"><i class="thumb"></i></div>
  </div>
</main>

<footer class="status">
  <p>单击可进行选择; 按 Tab 键并单击可选择其他项目; 按 Ctrl 键并单击可将新项目添加到选择集; 按 Sh</p>
  <div class="sel">
    <button aria-label="选择链接"><svg class="i20"><use href="#s1"/></svg></button><button aria-label="选择基线图元"><svg class="i20"><use href="#s2"/></svg></button><button aria-label="选择锁定图元"><svg class="i20"><use href="#s3"/></svg></button><button aria-label="按面选择图元"><svg class="i20"><use href="#s4"/></svg></button><button aria-label="选择时拖拽图元"><svg class="i20"><use href="#s5"/></svg></button><button aria-label="后台进程"><svg class="i20"><use href="#s6"/></svg></button><button class="flt"><svg class="i20"><use href="#s7"/></svg>:0</button>
  </div>
</footer>

<aside class="palette props">
  <div class="ptitle"><h2>属性</h2><button aria-label="关闭属性"><svg width="10" height="10" viewBox="0 0 10 10"><path d="M1 1l8 8M9 1L1 9" stroke="#000" stroke-width="1.600"/></svg></button></div>
  <div class="pmain">
    <div class="typesel">
      <svg width="66" height="66" viewBox="0 0 66 66"><rect x=".5" y=".5" width="65" height="65" fill="#f2f2f2" stroke="#e0e0e0"/><path d="M4 4h59v36L44 34 4 38z" fill="#e2e2e2"/><path d="M19 7h17c15 0 16 20 5 24l13 18-12-3-12-16-3 1v17l-8 1z" fill="url(#gr)"/><path d="M28 15h7c5 0 5 9 0 9h-7z" fill="#e8e8e8"/><path d="M41 31l13 18-12-3-9-14z" fill="#999"/></svg>
      <svg class="arr wide"><use href="#dn"/></svg>
    </div>
    <div class="typerow">
      <select aria-label="类型"><option>空心 拉伸</option></select>
      <button class="edit" disabled><svg class="i18" viewBox="0 0 18 18"><path d="M1.500 3l2-1.500h4V8H1.500zM9.500 3l2-1.500h5V8M1.500 11l2-1.500h4V16h-6zM9.500 7.500h7v9h-7zM11 10h4M11 12h4M12 14h2" fill="none" stroke="#999"/></svg>编辑类型</button>
    </div>
    <table>
      <colgroup><col class="c-name"><col class="c-value"><col class="c-link"></colgroup>
      <tbody>
      <tr class="sec"><th colspan="3"><div>约束<svg width="7" height="9" viewBox="0 0 7 9"><path d="M1 4l2.500-3L6 4M1 8l2.500-3L6 8" fill="none" stroke="#000" stroke-width="1.200"/></svg></div></th></tr>
      <tr><th><label for="end">拉伸终点</label></th><td><input id="end" class="focus" value="250.0"></td><td class="b"><button aria-label="关联终点参数"></button></td></tr>
      <tr><th><label for="start">拉伸起点</label></th><td><input id="start" value="0.0"></td><td class="b"><button aria-label="关联起点参数"></button></td></tr>
      <tr class="dis"><th>工作平面</th><td>参照线</td><td class="b"></td></tr>
      <tr class="sec"><th colspan="3"><div>标识数据<svg width="7" height="9" viewBox="0 0 7 9"><path d="M1 4l2.500-3L6 4M1 8l2.500-3L6 8" fill="none" stroke="#000" stroke-width="1.200"/></svg></div></th></tr>
      <tr><th>实心/空心</th><td>空心</td><td class="b"></td></tr>
      </tbody>
    </table>
    <div class="pfoot"><a href="#help">属性帮助</a><button disabled>应用</button></div>
  </div>
</aside>

<aside class="palette browser">
  <div class="ptitle"><h2>项目浏览</h2></div>
  <ul class="tree">
    <li><i class="bx first"></i><svg class="i18"><use href="#bview"/></svg><span>视</span></li>
    <li><i class="v"></i><i class="bx"></i><span>楼</span></li>
    <li><i class="v"></i><i class="v"></i><i class="v"></i></li>
    <li><i class="v"></i><i class="v"></i><i class="v"></i></li>
    <li><i class="v"></i><i class="v"></i><i class="v"></i></li>
    <li><i class="v"></i><i class="bx plus"></i><span>天</span></li>
    <li><i class="v"></i><i class="bx"></i><span>三</span></li>
    <li><i class="v"></i><i class="v"></i><i class="v"></i></li>
    <li><i class="v"></i><i class="bx"></i><span>立</span></li>
    <li><i class="v"></i><i class="v"></i><i class="v"></i></li>
    <li><i class="v"></i><i class="v"></i><i class="v"></i></li>
    <li><i class="v"></i><i class="v"></i><i class="v"></i></li>
    <li><i class="v"></i><i class="v"></i><i class="v"></i></li>
    <li><i class="v"></i><i class="bx plus"></i><span>面</span></li>
    <li><i class="v"></i><i class="bx plus"></i><span>面</span></li>
    <li><i class="v"></i><i class="bx plus"></i><span>面</span></li>
    <li><i class="v"></i><i class="bx plus last"></i><span>面</span></li>
    <li><i class="v tee"></i><svg class="i18"><use href="#bleg"/></svg><span>图</span></li>
    <li><i class="bx plus"></i><svg class="i18"><use href="#bsch"/></svg><span>明</span></li>
    <li><i class="v tee"></i><svg class="i18"><use href="#bsheet"/></svg><span>图</span></li>
    <li><i class="bx plus"></i><svg class="i18"><use href="#bfam"/></svg><span>族</span></li>
    <li><i class="bx plus"></i><svg class="i18"><use href="#bgrp"/></svg><span>组</span></li>
    <li><i class="v tee last"></i><svg class="i18"><use href="#link"/></svg><span>R</span></li>
  </ul>
</aside>

<svg class="note note-a" width="118" height="112" viewBox="0 0 118 112"><path d="M1 1l17 5-3 4 101 100L11 17l-4 4z" fill="#fb3b3b"/></svg>
<svg class="note note-b" width="112" height="94" viewBox="0 0 112 94"><path d="M111 1l-18 5 2 3L0 93l1 1 101-79 2 3z" fill="#fb3b3b"/></svg>
</body>
</html>
```
FILE: styles.css
```css
*, *::before, *::after { box-sizing: border-box; }
html, body { height: 100%; }
body {
  margin: 0;
  display: flex;
  flex-direction: column;
  position: relative;
  overflow: hidden;
  background: #d4d4d4;
  color: #222;
  font: 12px/16px "Noto Sans", "Noto Sans CJK SC", sans-serif;
}
button {
  display: flex;
  align-items: center;
  justify-content: center;
  margin: 0;
  padding: 0;
  border: 0;
  background: none;
  color: inherit;
  font: inherit;
  white-space: nowrap;
}
svg { display: block; flex: none; }
.sprite { position: absolute; width: 0; height: 0; }
.i12 { width: 12px; height: 12px; }
.i14 { width: 14px; height: 14px; }
.i18 { width: 18px; height: 18px; }
.i20 { width: 20px; height: 20px; }
.i26 { width: 26px; height: 26px; }
.i34 { width: 34px; height: 34px; }
.arr { width: 7px; height: 5px; color: #555; }
.arr.wide { width: 10px; height: 7px; }
.arr.up { transform: rotate(180deg); }
.arr.left { transform: rotate(90deg); }
.on { background: #b5d3f1; border: 1px solid #1467c0; }

/* title bar */
.titlebar { display: flex; align-items: center; height: 31px; flex: none; }
.qat, .info, .winbtns { display: flex; align-items: center; }
.qat button, .info button { width: 24px; height: 22px; }
.qat .dd, .info .dd { width: 12px; }
.logo { width: 33px; padding-left: 7px; }
.vsep { flex: none; width: 1px; height: 22px; margin: 0 3px; background: #bbb; }
.info .vsep { margin-left: 7px; }
.title { flex: 1; display: flex; justify-content: center; gap: 24px; margin: 0; font-size: 12px; font-weight: 400; white-space: nowrap; padding-bottom: 2px; }
.info .search { width: 180px; height: 22px; padding: 0 2px; border: 1px solid #000; background: #fff; font: italic 11px/16px "Noto Sans", "Noto Sans CJK SC", sans-serif; }
.search::placeholder { color: #777; opacity: 1; }
.info .login { width: 106px; justify-content: flex-start; padding-left: 2px; gap: 3px; }
.info .login + .dd { margin-right: 4px; }
.winbtns { gap: 11px; padding: 0 9px 2px 20px; }

/* tabs */
.tabs { display: flex; height: 21px; flex: none; padding-left: 5px; }
.tabs button { height: 21px; padding: 2px 10px 0; }
.tabs button:nth-child(odd) { padding-right: 11px; }
.tabs .file { width: 45px; margin-right: 1px; padding: 2px 0 0; background: #2a7ab5; color: #fff; }
.tabs .file:nth-child(odd) { padding-right: 0; }
.tabs .active, .tabs .active:nth-child(odd) { padding-right: 6px; background: #d3ebe8; color: #000; }
.tabs .fold { margin-left: auto; padding: 0 6px 0 0; }

/* ribbon */
.ribbon { display: flex; flex: none; height: 96px; margin: 0 5px; background: #d3ebe8; border-bottom: 1px solid #c9d4d2; padding-bottom: 1px; }
.panel { display: flex; flex-direction: column; flex: none; background: #f5f5f5; border-top: 1px solid #d3ebe8; margin-right: 1px; }
.pbody { display: flex; height: 76px; padding-top: 2px; }
.cap { display: flex; align-items: center; justify-content: center; gap: 4px; flex: 1; white-space: nowrap; }
.ctx .cap { background: #d3ebe8; border: solid #f5f5f5; border-width: 0 1px; }
.big { flex-direction: column; justify-content: flex-start; width: 38px; height: 72px; padding-top: 1px; gap: 3px; border: 1px solid transparent; }
.big.on { border-color: #1467c0; }
.big.off, .txt { color: #aaa; }
.pointer { width: 14px; height: 24px; margin: 5px 0; }
.p-select { width: 49px; }
.p-select .pbody { justify-content: center; }
.p-props { width: 82px; }
.p-clip { width: 75px; }
.p-geo { width: 110px; }
.p-mod { width: 237px; }
.p-meas { width: 55px; }
.p-new { width: 43px; }
.panel.ctx { margin: 0 0 0 4px; }
.p-mode { width: 42px; }
.p-draw { width: 129px; }
.p-wp { width: 122px; }
.panel.p-draw, .panel.p-wp { margin-left: 2px; }
.grid2 { display: grid; grid-template: 36px 36px / 38px 38px; column-gap: 2px; padding-left: 3px; }
.p-clip .pbody { padding-left: 6px; }
.col3 { display: grid; grid-template-rows: repeat(3, 24px); width: 32px; }
.georows { flex-direction: column; padding: 15px 0 0 5px; }
.row { display: flex; align-items: center; height: 24px; }
.txt { gap: 2px; width: 52px; justify-content: flex-start; }
.side { width: 34px; }
.p-mod .pbody { padding-left: 2px; }
.grid4 { display: grid; grid-template: 36px 36px / repeat(4, 39px); }
.grid3 { display: grid; grid-template: repeat(3, 24px) / repeat(3, 25px); padding-left: 2px; }
.meas { display: grid; grid-template: 36px 36px / 42px 10px; align-items: center; padding-left: 2px; }
.stack { flex-direction: column; align-items: center; }
.stack button { height: 36px; }
.p-draw .pbody { padding: 4px 2px; }
.gallery { display: flex; flex: 1; border: 1px solid #c6c6c6; background: #f7f7f7; }
.tools { flex: 1; display: grid; grid-template: repeat(3, 22px) / repeat(5, 22px); align-content: start; }
.gscroll { display: grid; grid-template-rows: 1fr 1fr 14px; width: 14px; border-left: 1px solid #ccc; }
.gscroll button + button { border-top: 1px solid #ccc; }
.p-wp .big { width: 40px; }
.options { flex: none; height: 25px; margin: 0 5px; padding: 6px 8px 0; background: #d3ebe8; color: #000; }

/* drawing area */
.work { flex: 1; position: relative; display: flex; flex-direction: column; justify-content: flex-end; margin: 0 5px; min-height: 0; background: #fff; border: solid #6b676b; border-width: 2px 0 1px 1px; border-top-color: #77777b; }
.model { position: absolute; left: 469px; top: 82px; }
.mdi { position: absolute; right: 20px; top: 6px; display: flex; gap: 4px; }
.cube { position: absolute; left: 1340px; top: 91px; width: 146px; height: 64px; }
.ring { position: absolute; left: 0; top: 46px; }
.face { position: relative; width: 52px; height: 53px; margin: 0 auto; background: linear-gradient(#dedede, #ececec); border: 1px solid #b4b4b4; color: #999da4; font: 300 32px/32px "Noto Sans CJK SC", sans-serif; }
.face span { background: #d9dbdf; }
.vscroll { position: absolute; right: 1px; top: 0; bottom: 0; width: 16px; padding: 6px 4px; background: #ededed; }
.viewbar { position: relative; display: flex; height: 19px; background: #ededed; border-bottom: 2px solid #fff; }
.vctl { display: flex; align-items: center; flex: none; gap: 14px; width: 258px; padding-left: 20px; color: #000; }
.scale { flex: none; white-space: nowrap; }
.htrack { flex: 1; padding: 1px 0 1px 608px; }
.thumb { display: block; width: 15px; height: 15px; border: 1px solid #888; border-radius: 1px; background: linear-gradient(#f6f6f6, #cfcfcf); }

/* status bar */
.status { display: flex; align-items: center; flex: none; height: 28px; padding: 0 88px 2px 6px; color: #000; }
.status p { margin: 0; white-space: nowrap; overflow: hidden; }
.sel { display: flex; gap: 6px; margin-left: auto; }
.sel .flt { margin-left: -3px; }

/* palettes */
.palette { position: absolute; background: #f0f0f0; color: #000; }
.ptitle { display: flex; align-items: center; justify-content: space-between; height: 21px; padding: 0 2px 3px 2px; background: #bfcddb; }
.ptitle h2 { margin: 0; font-size: 13px; line-height: 18px; font-weight: 700; color: #44505c; white-space: nowrap; }
.props { display: flex; flex-direction: column; left: 27px; top: 192px; width: 237px; bottom: 39px; padding: 4px 3px 2px; border: solid #777; border-width: 0 2px 2px 0; box-shadow: inset 1px 1px #e4e4e4; }
.pmain { flex: 1; display: flex; flex-direction: column; border: solid #6b6b6b; border-width: 1px 0 0 2px; background: #fff; min-height: 0; padding-right: 2px; }
.typesel { display: flex; align-items: center; justify-content: space-between; height: 72px; padding: 2px 0 2px 3px; border-bottom: 1px solid #ddd; background: linear-gradient(#f9f9f9, #ececec); }
.typesel .arr { color: #999; }
.typerow { display: flex; align-items: flex-start; height: 27px; padding-top: 1px; background: #f0f0f0; }
.typerow select { width: 142px; height: 25px; padding: 0 3px; border: 1px solid #777; border-radius: 3px; color: #000; font: inherit; appearance: none; background: linear-gradient(45deg, transparent 50%, #000 50%) no-repeat 129px 10px / 4px 4px, linear-gradient(-45deg, transparent 50%, #000 50%) no-repeat 133px 10px / 4px 4px, linear-gradient(#f4f4f4, #d8d8d8); }
.edit { gap: 3px; margin-left: 6px; height: 22px; color: #999; }
table { width: 226px; border-collapse: collapse; table-layout: fixed; }
.c-name { width: 108px; }
.c-value { width: 106px; }
.c-link { width: 12px; }
tr { height: 20px; }
th, td { height: 20px; padding: 0; font-weight: 400; text-align: left; line-height: 18px; border-bottom: 1px dotted #888; }
th { padding-left: 10px; }
td { padding-left: 2px; border-left: 1px dotted #888; }
td.b { padding: 0; border-right: 1px dotted #888; }
.sec th { padding: 0 6px 0 2px; background: #dcdcdc; border: 0; }
.sec div { display: flex; align-items: center; justify-content: space-between; }
.dis { color: #777; }
td input { display: block; width: 105px; height: 19px; margin-left: -2px; padding: 0 2px; border: 1px solid transparent; outline: 0; background: #fff; color: #000; font: inherit; }
td .focus { border-color: #000; }
td.b button { width: 10px; height: 18px; margin-left: 1px; border: 1px solid #777; border-radius: 2px; background: linear-gradient(#fff, #ccc); }
.pfoot { display: flex; align-items: center; justify-content: space-between; height: 25px; margin-top: auto; padding: 0 1px 0 2px; background: #f0f0f0; }
.pfoot a { color: #0066cc; }
.pfoot button { width: 73px; height: 19px; border: 1px solid #a5a9ae; border-radius: 3px; background: #f4f4f4; color: #888; }
.browser { right: 0; top: 237px; bottom: 0; width: 55px; padding: 4px 0 0 4px; overflow: hidden; box-shadow: inset 1px 1px #ddd; }
.browser .ptitle { height: 19px; padding-left: 1px; }
.tree { height: 100%; margin: 0; padding: 0; list-style: none; background: #fff; border: solid #6b6b6b; border-width: 1px 0 0 1px; }
.tree li { display: flex; align-items: center; height: 20px; white-space: nowrap; }
.tree i { position: relative; flex: none; width: 20px; height: 20px; background: repeating-linear-gradient(#aaa 0 1px, transparent 1px 2px) 8px 0 / 1px 20px no-repeat; }
.tree i.tee::after, .tree i.bx::after { content: ""; position: absolute; left: 9px; top: 10px; width: 10px; border-top: 1px dotted #999; }
.tree i.bx::after { left: 13px; width: 11px; }
.tree li > svg { position: relative; }
.tree i.bx::before { content: ""; position: absolute; z-index: 1; left: 4px; top: 6px; width: 9px; height: 9px; border: 1px solid #888; border-radius: 1px; background: linear-gradient(#3455a8, #3455a8) center / 5px 1px no-repeat, #fff; }
.tree i.plus::before { background: linear-gradient(#3455a8, #3455a8) center / 5px 1px no-repeat, linear-gradient(#3455a8, #3455a8) center / 1px 5px no-repeat, #fff; }
.tree i.first { background-position: 8px 10px; }
.tree i.last { background-size: 1px 10px; }
.tree span { padding-left: 4px; }
.tree i.bx + span { padding-left: 6px; }

/* callout arrows */
.note { position: absolute; pointer-events: none; }
.note-a { left: 920px; top: 118px; }
.note-b { left: 368px; top: 565px; }
```
